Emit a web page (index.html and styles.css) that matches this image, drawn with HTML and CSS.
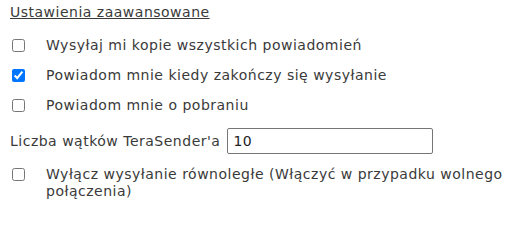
FILE: index.html
```html
<!DOCTYPE html>
<html lang="pl">
<head>
<meta charset="utf-8">
<link rel="stylesheet" href="styles.css">
</head>
<body>
<div class="panel">
  <div class="title">Ustawienia zaawansowane</div>
  <label class="row"><input type="checkbox" class="cb"><span class="txt">Wysyłaj mi kopie wszystkich powiadomień</span></label>
  <label class="row"><input type="checkbox" class="cb" checked><span class="txt">Powiadom mnie kiedy zakończy się wysyłanie</span></label>
  <label class="row"><input type="checkbox" class="cb"><span class="txt">Powiadom mnie o pobraniu</span></label>
  <div class="field"><span class="flabel">Liczba wątków TeraSender'a</span><input type="text" class="num" value="10"></div>
  <label class="row multi"><input type="checkbox" class="cb"><span class="txt">Wyłącz wysyłanie równoległe (Włączyć w przypadku wolnego połączenia)</span></label>
</div>
</body>
</html>
```
FILE: styles.css
```css
html, body {
  margin: 0;
  padding: 0;
  background: #ffffff;
}
.panel {
  font-family: "DejaVu Sans", Verdana, sans-serif;
  font-size: 14px;
  letter-spacing: 0.5px;
  color: #3a3a3a;
  padding: 4px 4px 0 10px;
  width: 516px;
  box-sizing: border-box;
}
.title {
  text-decoration: underline;
  line-height: 17px;
  height: 26px;
}
.row {
  display: flex;
  align-items: center;
  height: 30px;
}
.cb {
  margin: 0 21px 0 2px;
  width: 13px;
  height: 13px;
  flex: none;
}
.txt {
  line-height: 17px;
}
.field {
  display: flex;
  align-items: center;
  height: 38px;
  margin-top: 2px;
}
.flabel {
  margin-right: 7px;
}
.num {
  width: 206px;
  height: 26px;
  box-sizing: border-box;
  border: 1px solid #767676;
  border-radius: 2px;
  padding: 0 5px;
  font-family: "DejaVu Sans", Verdana, sans-serif;
  font-size: 14px;
  letter-spacing: 0.5px;
  color: #222222;
  margin: 0;
}
.multi {
  height: auto;
  align-items: flex-start;
  margin-top: 6px;
}
.multi .cb {
  margin-top: 2px;
}
```
